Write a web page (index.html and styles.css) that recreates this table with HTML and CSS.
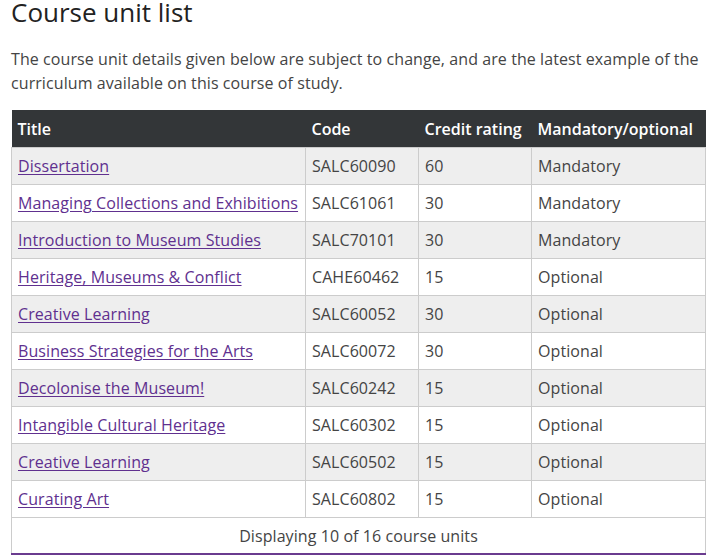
FILE: index.html
```html
<!DOCTYPE html>
<html lang="en">
<head>
<meta charset="utf-8">
<title>Course unit list</title>
<link rel="stylesheet" href="styles.css">
</head>
<body>
<main class="page">
  <h1 class="heading">Course unit list</h1>
  <p class="intro">The course unit details given below are subject to change, and are the latest example of the curriculum available on this course of study.</p>
  <table class="units">
    <colgroup>
      <col class="c-title">
      <col class="c-code">
      <col class="c-credit">
      <col class="c-mand">
    </colgroup>
    <thead>
      <tr><th>Title</th><th>Code</th><th>Credit rating</th><th>Mandatory/optional</th></tr>
    </thead>
    <tbody>
      <tr><td><a href="#">Dissertation</a></td><td>SALC60090</td><td>60</td><td>Mandatory</td></tr>
      <tr><td><a href="#">Managing Collections and Exhibitions</a></td><td>SALC61061</td><td>30</td><td>Mandatory</td></tr>
      <tr><td><a href="#">Introduction to Museum Studies</a></td><td>SALC70101</td><td>30</td><td>Mandatory</td></tr>
      <tr><td><a href="#">Heritage, Museums &amp; Conflict</a></td><td>CAHE60462</td><td>15</td><td>Optional</td></tr>
      <tr><td><a href="#">Creative Learning</a></td><td>SALC60052</td><td>30</td><td>Optional</td></tr>
      <tr><td><a href="#">Business Strategies for the Arts</a></td><td>SALC60072</td><td>30</td><td>Optional</td></tr>
      <tr><td><a href="#">Decolonise the Museum!</a></td><td>SALC60242</td><td>15</td><td>Optional</td></tr>
      <tr><td><a href="#">Intangible Cultural Heritage</a></td><td>SALC60302</td><td>15</td><td>Optional</td></tr>
      <tr><td><a href="#">Creative Learning</a></td><td>SALC60502</td><td>15</td><td>Optional</td></tr>
      <tr><td><a href="#">Curating Art</a></td><td>SALC60802</td><td>15</td><td>Optional</td></tr>
    </tbody>
    <tfoot>
      <tr><td colspan="4" class="summary">Displaying 10 of 16 course units</td></tr>
    </tfoot>
  </table>
</main>
</body>
</html>
```
FILE: styles.css
```css
html, body {
  margin: 0;
  padding: 0;
  background: #fff;
}
body {
  font-family: "Open Sans", "Liberation Sans", sans-serif;
  color: #3c3c3c;
  font-size: 16px;
  letter-spacing: 0.08px;
  overflow: hidden;
}
.page {
  padding: 0 5px 0 11px;
}
.heading {
  margin: 0;
  font-size: 26px;
  line-height: 24px;
  font-weight: 400;
  color: #222;
  letter-spacing: 0;
}
.intro {
  margin: 23px 0 0;
  line-height: 24px;
  font-size: 16px;
  color: #444;
}
.units {
  margin-top: 15px;
  width: 694px;
  border-collapse: collapse;
  table-layout: fixed;
  font-size: 16px;
  line-height: 24px;
}
.c-title { width: 294px; }
.c-code { width: 113px; }
.c-credit { width: 113px; }
.c-mand { width: 174px; }
.units th {
  background: #333638;
  color: #fff;
  font-weight: 600;
  text-align: left;
  padding: 7px 6px 6px 6px;
  height: 24px;
  border: 0;
  white-space: nowrap;
  letter-spacing: 0;
}
.units td {
  border: 1px solid #cccccc;
  padding: 6px 6px 6px 6px;
  color: #444;
  white-space: nowrap;
}
.units tbody tr:nth-child(odd) td {
  background: #eeeeee;
}
.units a {
  color: #60308f;
  text-decoration: underline;
  text-underline-offset: 2px;
}
.units .summary {
  text-align: center;
  background: #fff;
  border-bottom: 2px solid #6a3b8f;
  padding-bottom: 5px;
}
```
